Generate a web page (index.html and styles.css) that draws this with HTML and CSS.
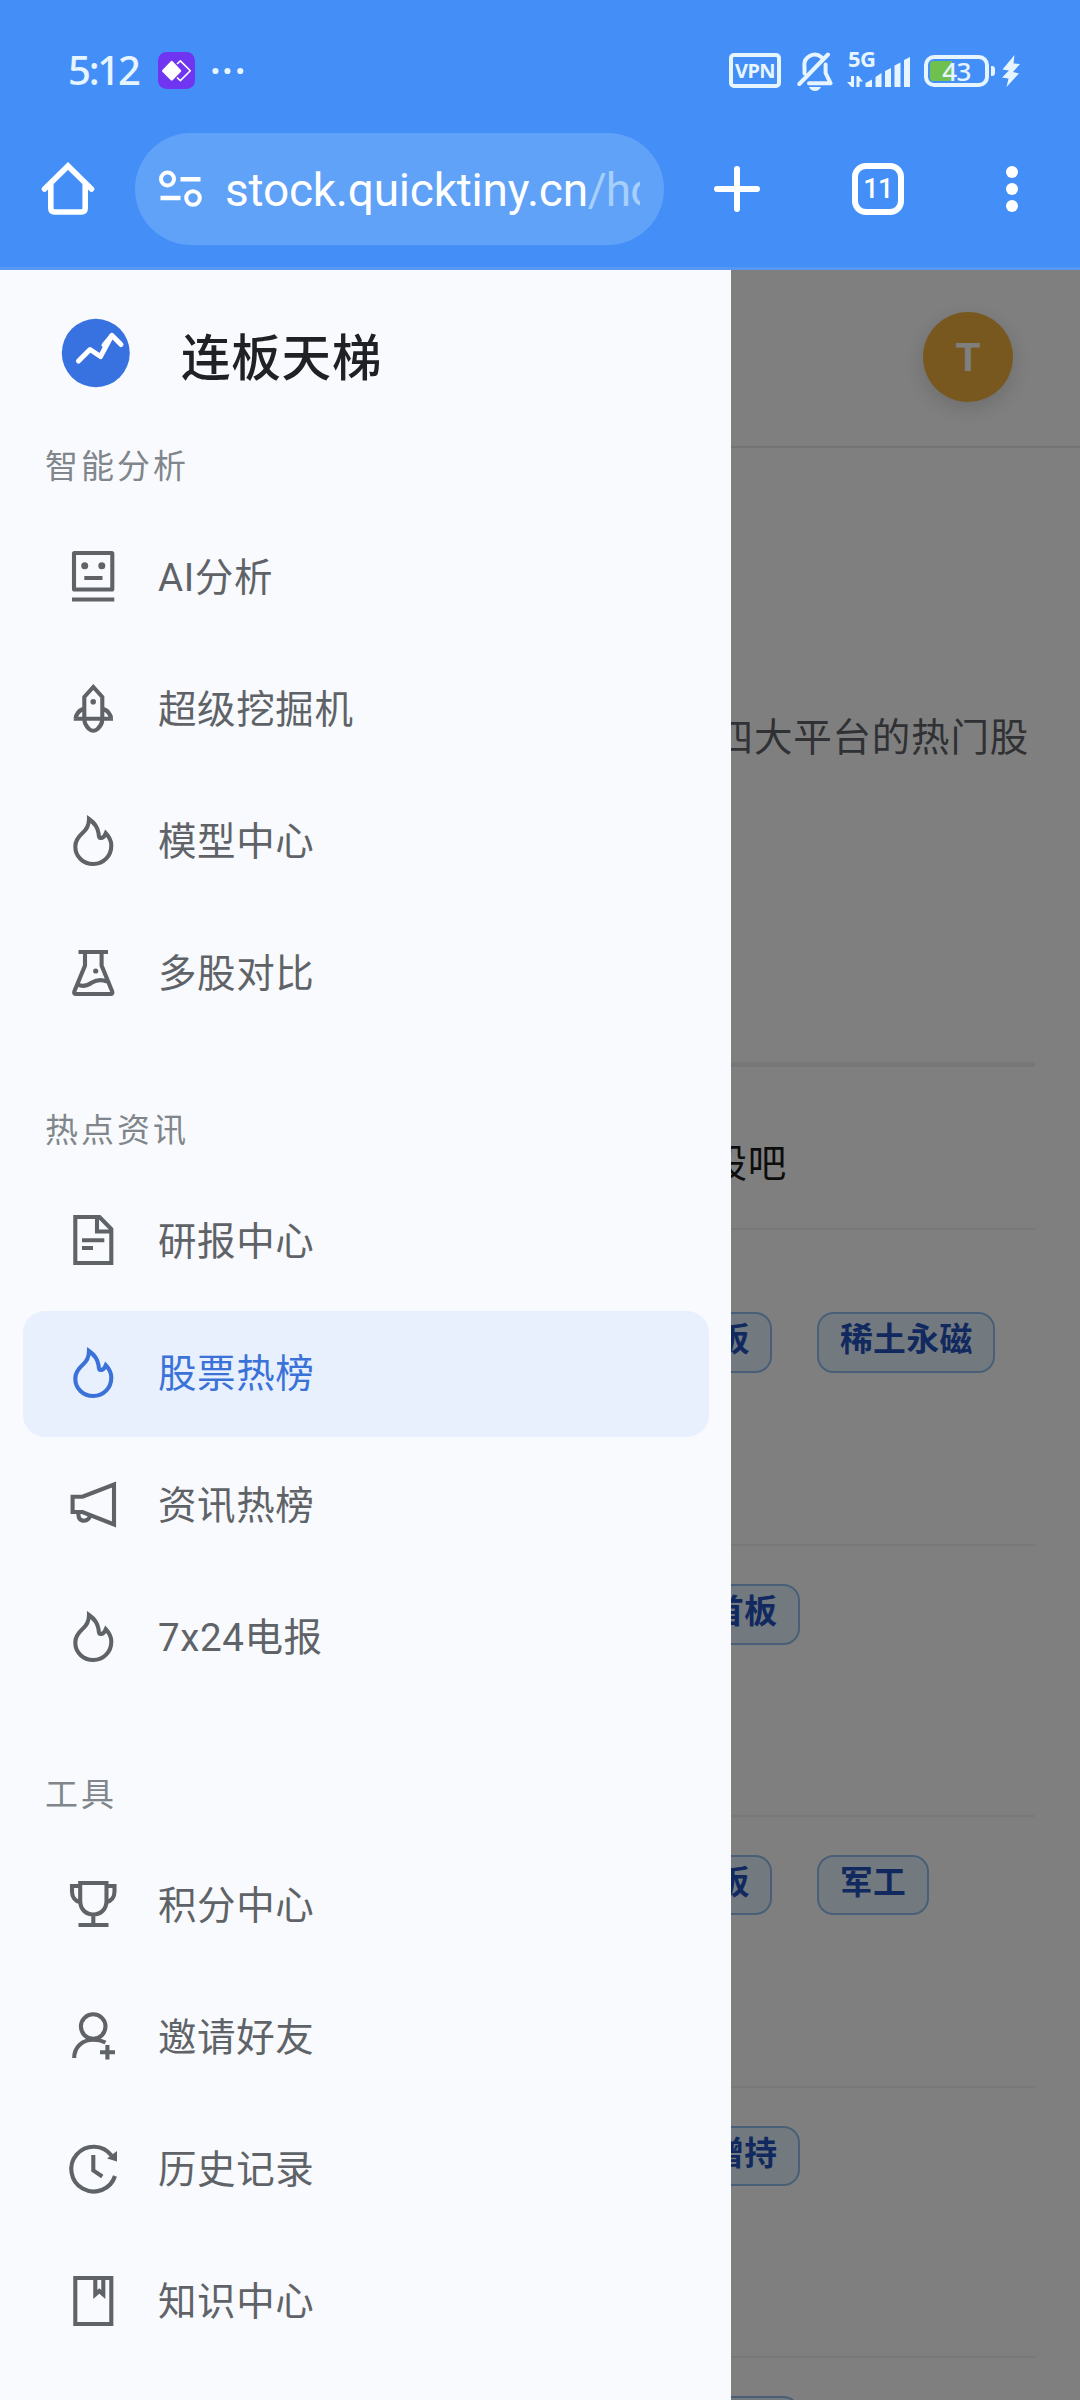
FILE: index.html
```html
<!DOCTYPE html>
<html lang="zh-CN">
<head>
<meta charset="utf-8">
<title>连板天梯</title>
<link rel="stylesheet" href="styles.css">
</head>
<body>
<svg class="sprite" width="0" height="0" aria-hidden="true">
  <symbol id="i-fire" viewBox="0 0 52 56"><path d="M22 6C22 13 19 17 15.5 20C11 24 8.3 28 8.3 33.5C8.3 43.5 16 51 26.3 51C36.5 51 44.3 43 44.3 32.5C44.3 28 42.3 24 38.8 20.2C37.5 23.5 36 25.3 33.5 25C31.5 24.8 32 23 31.5 20C30.5 14 27 9.5 22 6Z"/></symbol>
</svg>
<header class="chrome">
  <div class="status">
    <span class="clock">5:12</span>
    <svg class="app" width="37" height="37" viewBox="0 0 37 37"><rect width="37" height="37" rx="8.5" fill="#6f35f0"/><path d="M19 12L22.4 8.9L32.3 18.8L22.4 28.6L19 25.5" fill="none" stroke="#fff" stroke-width="1.6" stroke-linejoin="round"/><path d="M13.7 10.2L22 18.8L13.7 27.3L5.3 18.8Z" fill="#fff" stroke="#fff" stroke-width="2.5" stroke-linejoin="round"/></svg>
    <svg class="more" width="32" height="8" viewBox="0 0 32 8"><g fill="#e6f5ff"><circle cx="3.5" cy="4" r="3.1"/><circle cx="15.5" cy="4" r="3.1"/><circle cx="28.3" cy="4" r="3.1"/></g></svg>
    <span class="grow"></span>
    <span class="vpn">VPN</span>
    <svg class="bell" width="36" height="40" viewBox="0 0 36 40"><g fill="none" stroke="#e6f5ff" stroke-width="4" stroke-linecap="round" stroke-linejoin="round"><path d="M7.5 22.5V15.5A10.3 10.3 0 0 1 24.5 6.2"/><path d="M28.6 13.5V22L33.5 32.2H12"/><path d="M2.3 33L31 3.5"/></g><path d="M12 36H24Q22 40 18 40T12 36Z" fill="#e6f5ff"/></svg>
    <div class="cell">
      <span class="net">5G</span>
      <svg width="64" height="34" viewBox="0 0 64 34"><g fill="#e6f5ff"><path d="M4 20H7V31H4.5L0 26H4ZM9.500 31V20H11.500L16 25.500H12.500V31Z"/><path d="M18.500 31V27L25 23.500V31ZM28.500 31V21L34.500 17V31ZM38 31V15L44 12V31ZM47.500 31V9.500L53.500 6.500V31ZM57 31V4L63 1V31Z"/></g></svg>
    </div>
    <div class="battery"><span class="level"></span><span class="pct">43</span></div>
    <span class="nub"></span>
    <svg class="bolt" width="18" height="32" viewBox="0 0 18 32"><path d="M12.500 0L0.500 14.500L7 15.500L0 22.500L6.500 23.500L4.500 32L17 18.500L11 17L18 9L11.500 8.500Z" fill="#e6f5ff"/></svg>
  </div>
  <div class="toolbar">
    <svg class="home" width="54" height="54" viewBox="0 0 54 54"><path d="M3.500 27L27 4L50.500 27M9.800 22V46Q9.800 50 13.500 50H40.500Q44.200 50 44.200 46V22" fill="none" stroke="#fff" stroke-width="5.600" stroke-linecap="round" stroke-linejoin="miter"/></svg>
    <div class="omnibox">
      <svg width="44" height="38" viewBox="0 0 44 38"><g fill="none" stroke="#fff"><circle cx="8.500" cy="9" r="6.500" stroke-width="4"/><circle cx="34" cy="28" r="6.800" stroke-width="4"/><path d="M21.500 9.200H41.500M1.500 28H21.500" stroke-width="4.400"/></g></svg>
      <div class="url">stock.quicktiny.cn<span class="path">/ho</span></div>
    </div>
    <svg class="plus" width="48" height="48" viewBox="0 0 48 48"><path d="M24 4V44M4 24H44" stroke="#fff" stroke-width="6" stroke-linecap="round"/></svg>
    <span class="tabs">11</span>
    <svg class="kebab" width="12" height="48" viewBox="0 0 12 48"><g fill="#fff"><circle cx="6" cy="7" r="6"/><circle cx="6" cy="24" r="6"/><circle cx="6" cy="41" r="6"/></g></svg>
  </div>
</header>
<div class="viewport">
  <main class="page">
    <div class="topbar"><span class="avatar">T</span></div>
    <p class="intro">四大平台的热门股</p>
    <section class="board">
      <div class="tabline">股吧</div>
      <div class="row first"><span class="chip">首板</span><span class="chip">稀土永磁</span></div>
      <div class="row"><span class="chip wide">首板</span></div>
      <div class="row"><span class="chip">首板</span><span class="chip">军工</span></div>
      <div class="row"><span class="chip wide">增持</span></div>
      <div class="row"><span class="chip wide"></span></div>
    </section>
  </main>
  <div class="mask"></div>
  <aside class="drawer">
    <div class="brand">
      <svg width="69" height="70" viewBox="0 0 69 70"><ellipse cx="34.800" cy="35" rx="34" ry="34.200" fill="#3872e0"/><g fill="none" stroke="#fff" stroke-width="5" stroke-linecap="round" stroke-linejoin="round"><path d="M17.500 43L29 31.500L39.500 38.500L50.500 18"/><path d="M43 27L51 17.500L60 26.500"/></g></svg>
      <h1>连板天梯</h1>
    </div>
    <nav>
      <h2>智能分析</h2>
      <ul>
        <li><svg viewBox="0 0 52 56"><rect x="7" y="4" width="38.300" height="36.500" rx=".5"/><path d="M5 50.500H47.300M17.300 29H35.500"/><g class="dot"><circle cx="17.700" cy="16.700" r="3.500"/><circle cx="34.800" cy="16.700" r="3.500"/></g></svg>AI分析</li>
        <li><svg viewBox="0 0 52 56"><path d="M17.300 37.700V16L26.300 6L35.300 16V37.700M6.700 37.700H46M17 27.500C12 29.500 9 33 8.700 37.700M35.500 27.500C40.500 29.500 43.700 33 44 37.700M17.300 38C17.300 43 19 45 22 48Q26.300 51.500 30.500 48C33.500 45 35.300 43 35.300 38"/><circle class="dot" cx="26.200" cy="20.700" r="2.800"/></svg>超级挖掘机</li>
        <li><svg><use href="#i-fire"/></svg>模型中心</li>
        <li><svg viewBox="0 0 52 56"><path d="M11.500 7H41M18 7V20.500L7.300 46.500Q6.500 49 9 49H43.500Q46 49 45.200 46.500L34.600 20.500V7M11 39.500C16 42.500 20 41 25 37.500C30 34.500 34 34 40 36.500"/><circle class="dot" cx="28.700" cy="26" r="2.600"/></svg>多股对比</li>
      </ul>
      <h2>热点资讯</h2>
      <ul>
        <li><svg viewBox="0 0 52 56"><path d="M8.300 4H32.500L44.300 16V50H8.300ZM30 4V18.500H44M15 27.300H37.300M15 35H26"/></svg>研报中心</li>
        <li class="active"><svg><use href="#i-fire"/></svg>股票热榜</li>
        <li><svg viewBox="0 0 52 56"><path d="M5.600 19.700H15.500L47 7.500V47.500L15.500 35H5.600ZM11.500 36C11 41 13 43.700 17 43.700C20.500 43.700 22.500 41 23 38.500"/></svg>资讯热榜</li>
        <li><svg><use href="#i-fire"/></svg>7x24电报</li>
      </ul>
      <h2>工具</h2>
      <ul>
        <li><svg viewBox="0 0 52 56"><path d="M13.200 6H39.500V24C39.500 32 34 37.500 26.300 37.500S13.200 32 13.200 24ZM13 9H5V14.500C5 20 8 24 13 25M39.500 9H47.500V14.500C47.500 20 44.500 24 39.500 25M26.300 37V48M11.500 48H41.500"/></svg>积分中心</li>
        <li><svg viewBox="0 0 52 56"><circle cx="26.200" cy="17.600" r="12.300"/><path d="M7.200 49C7.200 38 15.500 30.800 26.200 30.800C31 30.800 35 31.800 38.500 33.500M40.400 36V50.500M33 43.200H48"/></svg>邀请好友</li>
        <li><svg viewBox="0 0 52 56"><path d="M48 35A22.400 22.400 0 1 1 44.500 14.500M26.300 14V29.500L35.300 35.500"/><path class="dot" d="M50 10V20.500L40 17.500Z"/></svg>历史记录</li>
        <li><svg viewBox="0 0 52 56"><path d="M8.300 5H44.300V51H8.300ZM28.300 5V21.500L32.300 18L36.300 21.500V5"/></svg>知识中心</li>
      </ul>
    </nav>
  </aside>
</div>
</body>
</html>
```
FILE: styles.css
```css
* { box-sizing: border-box; }
body { margin: 0; width: 1080px; height: 2400px; overflow: hidden; display: flex; flex-direction: column; font-family: Roboto, "Noto Sans CJK SC", sans-serif; background: #fff; }
svg { display: block; flex: none; }
h1, h2, ul, p { margin: 0; padding: 0; }
.sprite { display: none; }

.chrome { flex: none; height: 270px; background: #448ef7; border-bottom: 3px solid #5898f3; color: #fff; }
.status { height: 133px; display: flex; align-items: center; padding: 8px 60px 0 68px; color: #e6f5ff; }
.clock { width: 90px; margin-top: -2px; font: 500 40px/44px "Noto Sans", sans-serif; letter-spacing: -2.2px; }
.more { margin-left: 17px; }
.grow { flex: 1; }
.vpn { width: 52px; height: 35px; border: 4px solid #e6f5ff; border-radius: 5px; font: 700 20px/27px "Noto Sans", sans-serif; text-align: center; letter-spacing: -.5px; }
.bell { margin-left: 16px; }
.cell { position: relative; width: 64px; height: 40px; margin-left: 14px; display: flex; align-items: flex-end; }
.cell svg { margin-bottom: 1px; }
.net { position: absolute; left: 1px; top: -2px; font: 700 22px/18px "Noto Sans", sans-serif; letter-spacing: -.5px; }
.battery { position: relative; width: 65px; height: 32px; margin-left: 13px; border: 4px solid #e6f5ff; border-radius: 10px; padding: 2px; }
.level { display: block; width: 22px; height: 20px; border-radius: 3px 0 0 3px; background: #70c050; }
.pct { position: absolute; inset: 0; text-align: center; font: 500 26px/24px "Noto Sans", sans-serif; letter-spacing: -.5px; }
.nub { width: 4px; height: 10px; margin-left: 2px; border-radius: 0 3px 3px 0; background: #e6f5ff; }
.bolt { margin-left: 7px; }

.toolbar { height: 112px; display: flex; align-items: center; padding-left: 41px; }
.omnibox { width: 529px; height: 112px; margin-left: 40px; padding: 0 24px; border-radius: 56px; background: #60a2f7; display: flex; align-items: center; }
.url { width: 415px; margin-left: 22px; padding-top: 2px; overflow: hidden; white-space: nowrap; font-size: 46px; line-height: 60px; letter-spacing: -.22px; }
.path { color: #a6cffc; letter-spacing: -1px; }
.plus { margin-left: 49px; }
.tabs { width: 52px; height: 52px; margin-left: 91px; border: 6px solid #fff; border-radius: 14px; font: 500 27px/41px Roboto, sans-serif; text-align: center; letter-spacing: -.5px; }
.kebab { margin-left: 102px; }

.viewport { position: relative; flex: 1; overflow: hidden; }
.topbar { height: 178px; border-bottom: 2px solid #e8e8e8; padding: 42px 67px 0 0; display: flex; justify-content: flex-end; }
.avatar { width: 90px; height: 90px; border-radius: 50%; background: #f0b03c; color: #fff; font: 700 40px/90px "Liberation Sans", sans-serif; text-align: center; box-shadow: 0 6px 22px rgba(0, 0, 0, .15); }
.intro { height: 614px; padding: 259px 51px 0 0; text-align: right; font-size: 38.5px; line-height: 62px; letter-spacing: .8px; color: #5f6368; }
.board { margin-right: 45px; border-top: 5px solid #ebeef2; }
.tabline { height: 163px; border-bottom: 2px solid #f0f0f0; padding: 66px 248px 0 0; text-align: right; font-size: 38.5px; line-height: 62px; letter-spacing: .8px; color: #1a1a1a; }
.row { height: 270.8px; border-bottom: 2px solid #f0f0f0; padding: 38px 0 0 661px; display: flex; align-items: flex-start; gap: 45px; }
.row.first { height: 316px; padding-top: 82px; }
.chip { flex: none; height: 60.5px; padding: 0 20.5px; border: 2px solid #91bfee; border-radius: 16.5px; background: #e6f4ff; color: #2452c0; font-weight: 700; font-size: 32.8px; line-height: 53px; letter-spacing: .4px; white-space: nowrap; }
.chip.wide { width: 139px; text-align: right; }
.mask { position: absolute; inset: 0; background: rgba(0, 0, 0, .5); }

.drawer { position: absolute; left: 0; top: 0; width: 731px; height: 100%; background: #f8fafd; color: #5f6368; }
.brand { height: 166px; display: flex; align-items: flex-start; padding: 48px 0 0 61px; }
.brand h1 { margin-left: 51px; padding-top: 6px; font-size: 49.5px; line-height: 70px; font-weight: 500; letter-spacing: .8px; color: #202124; }
h2 { height: 79px; padding-left: 45px; font-size: 33px; line-height: 61px; font-weight: 400; letter-spacing: 3px; color: #80868b; }
ul { list-style: none; padding: 0 22px 0 23px; margin-bottom: 62.25px; }
li { height: 126.5px; margin-bottom: 5.5px; border-radius: 22px; padding-left: 44px; display: flex; align-items: center; font-size: 38.5px; line-height: 62px; letter-spacing: .6px; }
li svg { width: 52px; height: 56px; margin: -2px 39px 0 0; fill: none; stroke: currentColor; stroke-width: 4.1; }
li .dot { fill: currentColor; stroke: none; }
li.active { background: #e8f0fe; color: #3a72d8; }
```
